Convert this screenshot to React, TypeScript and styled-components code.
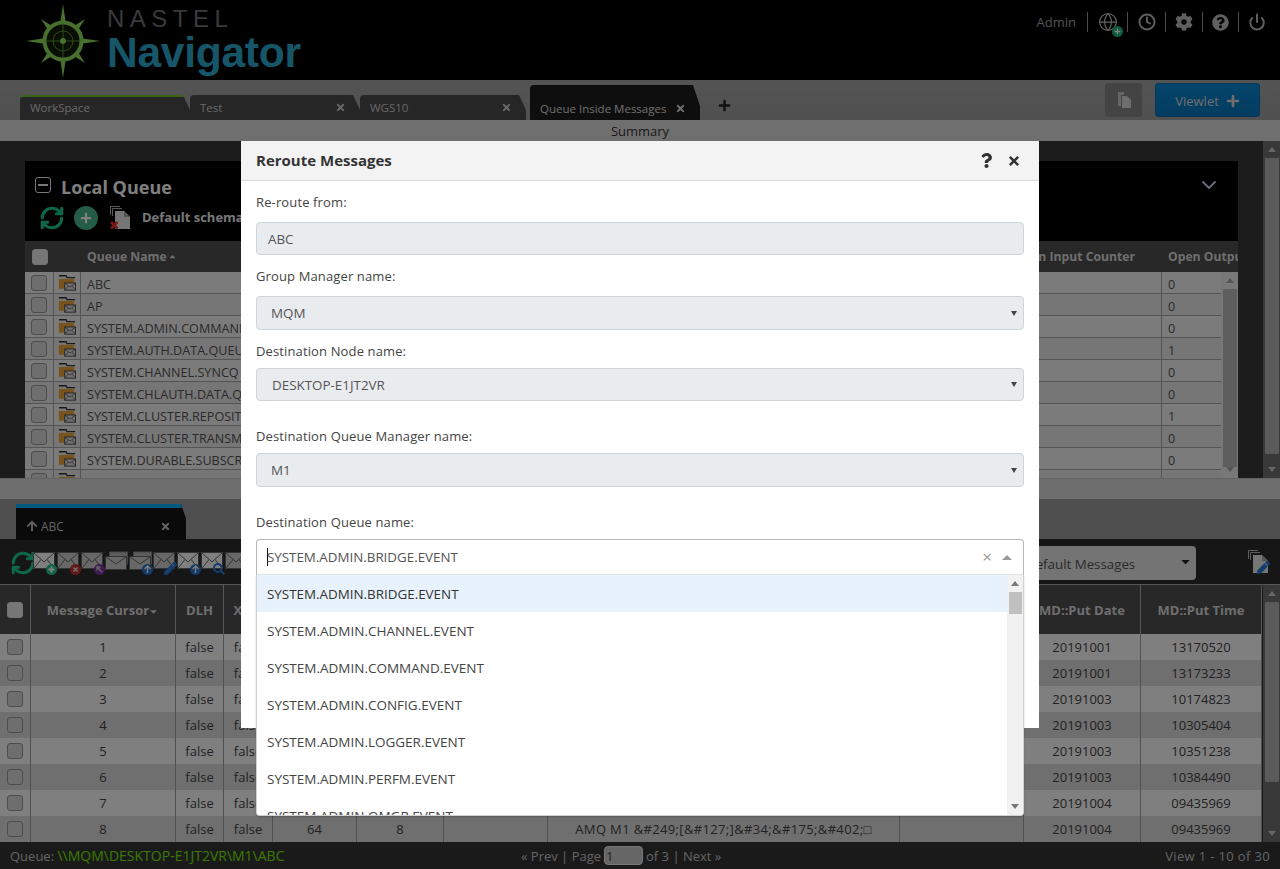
import React from "react";
import styled, { createGlobalStyle } from "styled-components";
import { FaCog, FaQuestionCircle, FaPlus, FaTimes, FaArrowUp, FaSearch, FaPen, FaQuestion, FaCaretDown, FaCaretUp } from "react-icons/fa";
import { Globe, Clock, Power, ChevronDown, RefreshCw } from "lucide-react";

const Global = createGlobalStyle`
  html, body { margin: 0; padding: 0; height: 100%; overflow: hidden; background: #000; }
  body { font-family: "Open Sans", "Liberation Sans", sans-serif; font-size: 13px; color: #555; }
  * { box-sizing: border-box; }
`;

const Page = styled.div`height: 869px; display: flex; flex-direction: column; overflow: hidden;`;
const Header = styled.header`height: 80px; background: #000; display: flex; justify-content: space-between; padding: 0 5px 0 26px;`;
const Logo = styled.div`display: flex; align-items: flex-start; gap: 7px; padding-top: 4px;`;
const LogoText = styled.div`display: flex; flex-direction: column; font-family: "Liberation Sans", sans-serif; padding-top: 3px;`;
const LogoTop = styled.span`font-size: 24px; line-height: 24px; letter-spacing: 5.5px; color: #747474;`;
const LogoMain = styled.span`font-size: 42.5px; line-height: 42px; font-weight: 700; letter-spacing: -0.25px; color: #36d4ff; margin-top: 1px; opacity: .82;`;
const UserBar = styled.div`display: flex; align-items: center; height: 44px; color: #a6a6a6;`;
const UserName = styled.span`font-size: 13px; margin-right: 11px;`;
const UserIcon = styled.div<{ $w: number }>`
  position: relative; width: ${p => p.$w}px; height: 20px; display: flex; align-items: center; justify-content: center; border-left: 1px solid #999; color: #c0c0c0;
`;
const GlobeBadge = styled.span`position: absolute; right: 4px; bottom: -5px; width: 11px; height: 11px; border-radius: 50%; background: #1fb67a; color: #fff; display: flex; align-items: center; justify-content: center;`;

const TabBar = styled.div`height: 40px; background: linear-gradient(#a8a8a8, #a0a0a0); display: flex; align-items: flex-end; padding: 0 20px; position: relative;`;
const Tab = styled.div<{ $w: number; $active?: boolean; $top?: string; $mr?: number }>`
  width: ${p => p.$w}px; height: ${p => (p.$active ? 35 : 25)}px; margin-right: ${p => p.$mr ?? 0}px;
  background: ${p => (p.$active ? "#1c1c1c" : "#4c4c4c")}; color: ${p => (p.$active ? "#ddd" : "#d0d0d0")};
  border-top: 2px solid ${p => p.$top ?? "transparent"}; border-top-left-radius: 4px;
  clip-path: polygon(0 0, calc(100% - 7px) 0, 100% 60%, 100% 100%, 0 100%);
  display: flex; align-items: center; justify-content: space-between; padding: ${p => (p.$active ? "9px" : "0")} 14px ${p => (p.$active ? "0" : "2px")} 10px; font-size: 11.5px; white-space: nowrap;
`;
const AddTab = styled.span`margin: 0 0 8px 18px; color: #222; display: flex;`;
const TabActions = styled.div`margin-left: auto; align-self: flex-start; padding-top: 3px; display: flex; gap: 13px;`;
const CopyButton = styled.button`width: 37px; height: 34px; border: none; border-radius: 3px; background: #888; display: flex; align-items: center; justify-content: center; padding: 0;`;
const ViewletButton = styled.button`width: 105px; height: 34px; border: 1px solid #0a6fb8; border-radius: 3px; background: linear-gradient(#0a8ad8, #0878c0); color: #ddd; font: 13px "Open Sans", sans-serif; display: flex; align-items: center; justify-content: center; gap: 7px; padding: 1px 0 0;`;
const SummaryBar = styled.div`height: 21px; background: #dedede; color: #333; text-align: center; font-size: 13px; line-height: 22px;`;

const UpperArea = styled.section`height: 337px; background: #383838; display: flex; overflow: hidden;`;
const PanelWrap = styled.div`flex: 1; padding: 20px 25px 0 25px; min-width: 0;`;
const Panel = styled.div`height: 317px; display: flex; flex-direction: column; overflow: hidden;`;
const PanelHead = styled.div`height: 80px; background: #000; padding: 14px 10px 0 10px; display: flex; flex-direction: column; position: relative;`;
const TitleRow = styled.div`display: flex; align-items: center; gap: 10px;`;
const TitleText = styled.h2`margin: 0; color: #fff; font-size: 18px; line-height: 24px; font-weight: 700;`;
const MinusBox = styled.span`width: 16px; height: 16px; border: 1.5px solid #eee; border-radius: 3px; position: relative; margin-top: -4px;
  &::after { content: ""; position: absolute; left: 2px; right: 2px; top: 5.5px; height: 2px; background: #eee; }`;
const ToolRow = styled.div`display: flex; align-items: center; margin-top: 6px; margin-left: 4px;`;
const PlusDisc = styled.span`width: 24px; height: 24px; border-radius: 50%; background: #49b98f; color: #fff; display: flex; align-items: center; justify-content: center; margin: 0 12px 0 9px;`;
const SchemaLabel = styled.span`color: #eee; font-weight: 700; font-size: 13px; margin-left: 10px; padding-bottom: 3px; white-space: nowrap;`;
const Collapse = styled.span`position: absolute; right: 17px; top: 12px; color: #cfe0f0; display: flex;`;

const UpperHead = styled.div`height: 31px; flex: none; background: #505050; display: grid; grid-template-columns: 29px 27px 1fr 190px 76px; align-items: center; color: #ddd; font-weight: 700; font-size: 12.2px; white-space: nowrap; overflow: hidden;`;
const HeadCell = styled.div<{ $right?: boolean; $pad?: number }>`padding: 0 ${p => p.$pad ?? 6}px; text-align: ${p => (p.$right ? "right" : "left")}; overflow: hidden;`;
const CheckCell = styled.div`display: flex; justify-content: center; align-items: center; height: 100%;`;
const Check = styled.span<{ $filled?: boolean }>`width: 16px; height: 16px; border-radius: 3px; border: 1px solid ${p => (p.$filled ? "#e4e4e4" : "#9a9a9a")}; background: ${p => (p.$filled ? "#eee" : "#dcdcdc")}; display: block;`;
const UpperBody = styled.div`display: flex; flex: 1; min-height: 0; overflow: hidden;`;
const UpperRows = styled.div`flex: 1; min-width: 0;`;
const UpperRow = styled.div<{ $alt?: boolean }>`height: 22px; display: grid; grid-template-columns: 29px 27px 1fr 59px; background: ${p => (p.$alt ? "#ececec" : "#f6f6f6")}; border-bottom: 1px solid #a8a8a8; color: #555; font-size: 12.6px;`;
const UpperCell = styled.div`border-right: 1px solid #a8a8a8; padding: 3px 6px 0; white-space: nowrap; overflow: hidden; display: flex; align-items: center;
  &:last-child { border-right: none; }`;
const UpperCheck = styled(UpperCell)`padding: 0; justify-content: center;`;
const IconCell = styled(UpperCell)`padding: 0; justify-content: center;`;

const Track = styled.div<{ $bg: string; $w: number }>`width: ${p => p.$w}px; flex: none; background: ${p => p.$bg}; display: flex; flex-direction: column; align-items: center;`;
const Thumb = styled.div<{ $h: number; $c: string; $top: number }>`width: calc(100% - 3px); height: ${p => p.$h}px; background: ${p => p.$c}; margin-top: ${p => p.$top}px;`;
const Arrow = styled.span<{ $down?: boolean; $c: string }>`width: 0; height: 0; margin: 6px 0; border-left: 4.5px solid transparent; border-right: 4.5px solid transparent;
  ${p => (p.$down ? `border-top: 5px solid ${p.$c}; margin-top: auto;` : `border-bottom: 5px solid ${p.$c};`)}`;

const Scroll: React.FC<{ bg: string; arrow: string; thumb: string; w?: number; h: number; top?: number }> = ({ bg, arrow, thumb, w = 16, h, top = 0 }) => (
  <Track $bg={bg} $w={w}>
    <Arrow $c={arrow} />
    <Thumb $c={thumb} $h={h} $top={top} />
    <Arrow $c={arrow} $down />
  </Track>
);

const Divider = styled.div`height: 21px; background: #dcdcdc; border-top: 1px solid #c8c8c8;`;
const LowerTabs = styled.div`height: 40px; background: #9e9e9e; padding: 5px 0 0 16px; display: flex;`;
const MsgTab = styled.div`width: 170px; height: 36px; background: #141414; border-top: 4px solid #08b4f8; clip-path: polygon(0 0, calc(100% - 5px) 0, 100% 40%, 100% 100%, 0 100%); color: #c8c8c8; display: flex; align-items: center; padding: 4px 15px 0 10px; gap: 3px; font-size: 12px;`;
const MsgTabClose = styled.span`margin-left: auto; display: flex;`;
const Toolbar = styled.div`height: 46px; background: #2c2c2c; display: flex; align-items: center; padding: 3px 10px 0; border-bottom: 1px solid #b0b0b0;`;
const EnvelopeGroup = styled.div`display: flex; align-items: center; margin-left: -3px;`;
const MsgSelect = styled.div`margin-left: auto; width: 196px; height: 34px; border-radius: 4px; background: #e9e9e9; color: #555; padding: 2px 3px 0 26px; display: flex; align-items: center; justify-content: space-between; font-size: 13.3px;`;
const SelectArrow = styled.span`display: flex; margin: -6px 1px 0 0;`;
const DocEdit = styled.span`margin: 0 0 3px 52px; display: flex;`;

const LowerTable = styled.div`flex: 1; display: flex; flex-direction: column; min-height: 0; overflow: hidden;`;
const LowerInner = styled.div`display: flex; flex: 1; min-height: 0; overflow: hidden;`;
const LowerCols = styled.div`width: 1263px; flex: none; border-right: 1px solid #333;`;
const cols = "31px 145px 48px 49px 84px 87px 104px 352px 124px 117px 121px";
const LowerHead = styled.div`height: 49px; background: #505050; display: grid; grid-template-columns: ${cols}; color: #ddd; font-weight: 700; font-size: 13px;`;
const LowerHeadCell = styled.div`border-right: 1px solid #b0b0b0; display: flex; align-items: center; justify-content: center; white-space: nowrap; overflow: hidden;`;
const LowerRow = styled.div<{ $alt?: boolean }>`height: 26px; display: grid; grid-template-columns: ${cols}; background: ${p => (p.$alt ? "#dedede" : "#fff")}; color: #444; font-size: 13px;`;
const LowerCell = styled.div`border-right: 1px solid #a0a0a0; display: flex; align-items: center; justify-content: center; white-space: nowrap; overflow: hidden;`;
const Payload = styled.span`letter-spacing: .35px;`;
const SortMark = styled.span`display: inline-flex; margin-left: -1px; margin-top: 3px;`;

const Footer = styled.footer`height: 27px; flex: none; background: #343434; color: #c8c8c8; display: grid; grid-template-columns: 511px auto 1fr; align-items: center; padding: 0 10px; font-size: 13px;`;
const PathText = styled.span`color: #78f000; font-size: 14px;`;
const Pager = styled.div`display: flex; align-items: center; gap: 3px;`;
const PageInput = styled.span`width: 39px; height: 19px; border-radius: 4px; background: #ccc; border: 1px solid #eee; color: #444; padding-left: 1px; line-height: 18px; font-size: 13px;`;
const ViewCount = styled.div`text-align: right; letter-spacing: .35px;`;

const Backdrop = styled.div`position: fixed; inset: 0; background: rgba(0,0,0,.5);`;
const Modal = styled.div`position: fixed; left: 241px; top: 141px; width: 798px; height: 587px; background: #fff; color: #444; display: flex; flex-direction: column;`;
const ModalHead = styled.div`height: 40px; flex: none; background: #f3f3f3; border-bottom: 1px solid #dcdcdc; display: flex; align-items: center; padding: 0 18px 0 15px; color: #333;`;
const ModalTitle = styled.h3`margin: 0 0 2px; font-size: 15px; font-weight: 700; flex: 1;`;
const ModalIcons = styled.div`display: flex; align-items: center; gap: 13px; color: #333;`;
const ModalBody = styled.div`padding: 0 15px;`;
const Field = styled.div<{ $top: number; $gap: number }>`margin-top: ${p => p.$top}px; display: flex; flex-direction: column; gap: ${p => p.$gap}px; position: relative;`;
const Label = styled.label`font-size: 13px; line-height: 20px; color: #444; letter-spacing: .13px;`;
const ReadBox = styled.div<{ $h: number; $pad?: number }>`height: ${p => p.$h}px; background: #e9ecef; border: 1px solid #ced4da; border-radius: 4px; display: flex; align-items: center; justify-content: space-between; padding: 0 6px 0 ${p => p.$pad ?? 15}px; font-size: 13.4px; color: #555;`;
const SelectCaret = styled.span`width: 0; height: 0; border-left: 3.5px solid transparent; border-right: 3.5px solid transparent; border-top: 5px solid #444;`;
const Combo = styled.div`position: relative;`;
const ComboInput = styled.div`height: 36px; border: 1px solid #b8b8b8; border-bottom-color: #e4e4e4; border-radius: 4px 4px 0 0; display: flex; align-items: center; padding: 0 11px 0 10px; color: #555; font-size: 13.35px;`;
const Caret = styled.span`width: 1px; height: 18px; background: #111; margin-right: -1px;`;
const ComboText = styled.span`flex: 1;`;
const ClearX = styled.span`color: #999; font-size: 17px; line-height: 16px; margin-right: 10px;`;
const UpCaret = styled.span`width: 0; height: 0; border-left: 5px solid transparent; border-right: 5px solid transparent; border-bottom: 5px solid #999;`;
const DropList = styled.div`position: absolute; left: 0; right: 0; top: 100%; height: 241px; background: #fff; border: 1px solid #d0d0d0; border-top: none; border-radius: 0 0 4px 4px; display: flex; overflow: hidden; z-index: 2; box-shadow: 0 1px 2px rgba(0,0,0,.2);`;
const Items = styled.div`flex: 1; min-width: 0; overflow: hidden;`;
const Item = styled.div<{ $active?: boolean }>`height: 37px; line-height: 39px; padding-left: 10px; font-size: ${p => (p.$active ? "13.4px" : "13.5px")}; color: ${p => (p.$active ? "#333" : "#444")}; background: ${p => (p.$active ? "#e8f2fc" : "#fff")}; font-weight: ${p => (p.$active ? 500 : 400)}; white-space: nowrap;`;

const Compass = () => (
  <svg width="74" height="74" viewBox="0 0 74 74">
    <g fill="#8ee05c">
      <polygon points="37,0 41,27 33,27" /><polygon points="37,74 41,47 33,47" />
      <polygon points="0,37 27,33 27,41" /><polygon points="74,37 47,33 47,41" />
      <polygon points="15,15 26,22 22,26" /><polygon points="59,15 52,26 48,22" />
      <polygon points="15,59 22,48 26,52" /><polygon points="59,59 48,52 52,48" />
    </g>
    <circle cx="37" cy="37" r="18.5" fill="#101c08" stroke="#8ee05c" strokeWidth="4" />
    <circle cx="37" cy="37" r="10" fill="none" stroke="#6cb044" strokeWidth=".8" />
    <path d="M37 19V55M19 37H55" stroke="#6cb044" strokeWidth=".8" />
    <circle cx="37" cy="37" r="3" fill="#8ee05c" />
  </svg>
);

const Refresh: React.FC = () => <RefreshCw size={26} color="#1fcf96" strokeWidth={2.8} />;

const StackDoc: React.FC<{ children?: React.ReactNode }> = ({ children }) => (
  <svg width="22" height="24" viewBox="0 0 22 24">
    <path d="M.5 9V.5H10M2.500 10V2.500H12" stroke="#ccc" strokeWidth=".9" fill="none" />
    <path d="M5 5H14L20 11V23H5Z" fill="#ececec" />
    <path d="M14 5V11H20Z" fill="#aaa" />
    {children}
  </svg>
);

const Envelope: React.FC<{ light?: boolean; double?: boolean; badge?: string; glyph?: React.ReactNode }> = ({ light, double, badge, glyph }) => {
  const fill = light ? "#fff" : "#d0d0d0";
  return (
    <svg width="24" height="24" viewBox="0 0 24 24">
      {double && <rect x="4.5" y="1" width="18" height="12" fill="#bbb" stroke="#888" />}
      <rect x="0.5" y={double ? 5.5 : 1.5} width="21" height={double ? 13 : 16} fill={fill} stroke="#666" />
      <path d={double ? "M1 6L11 13L21 6" : "M1 2L11 11L21 2M1 17L8 8.5M21 17L14 8.5"} fill="none" stroke="#666" strokeWidth="1" />
      {badge && <circle cx="18.5" cy="18.5" r="5.5" fill={badge} />}
      {glyph}
    </svg>
  );
};
const plusG = <path d="M18.500 15.500v6M15.500 18.500h6" stroke="#fff" strokeWidth="2" />;
const xG = <path d="M16.500 16.500l4 4m0-4l-4 4" stroke="#ddd" strokeWidth="1.600" />;
const nwG = <path d="M21 21l-5-5m0 3.500v-3.500h3.500" stroke="#ccc" strokeWidth="1.400" fill="none" />;
const upG = <path d="M18.500 22v-7m-3 3l3-3l3 3" stroke="#fff" strokeWidth="1.400" fill="none" />;

const FolderMail = () => (
  <svg width="18" height="17" viewBox="0 0 20 18">
    <path d="M1 1.500H9L10 3.500H19" fill="none" stroke="#333" strokeWidth="1.400" />
    <path d="M1 5H18V16H1Z" fill="#f0a838" />
    <rect x="7.500" y="9.500" width="12" height="8" fill="#e4e4e4" stroke="#444" />
    <path d="M8 10L13.500 14L19 10M8 17L11.500 13M19 17L15.500 13" stroke="#444" strokeWidth=".8" fill="none" />
  </svg>
);

const upperNames = ["ABC", "AP", "SYSTEM.ADMIN.COMMAND.QUEUE", "SYSTEM.AUTH.DATA.QUEUE", "SYSTEM.CHANNEL.SYNCQ", "SYSTEM.CHLAUTH.DATA.QUEUE", "SYSTEM.CLUSTER.REPOSITORY.QUEUE", "SYSTEM.CLUSTER.TRANSMIT.QUEUE", "SYSTEM.DURABLE.SUBSCRIBER.QUEUE", ""];
const upperOut = ["0", "0", "0", "1", "0", "0", "1", "0", "0", ""];
const lowerRows = [
  ["1", "20191001", "13170520"], ["2", "20191001", "13173233"], ["3", "20191003", "10174823"], ["4", "20191003", "10305404"],
  ["5", "20191003", "10351238"], ["6", "20191003", "10384490"], ["7", "20191004", "09435969"], ["8", "20191004", "09435969"],
];
const payload = "AMQ M1 \u0026#249;[\u0026#127;]\u0026#34;\u0026#175;\u0026#402;\u25A1";
const options = ["BRIDGE", "CHANNEL", "COMMAND", "CONFIG", "LOGGER", "PERFM", "QMGR"].map(s => `SYSTEM.ADMIN.${s}.EVENT`);

export default function App() {
  return (
    <>
      <Global />
      <Page>
        <Header>
          <Logo>
            <Compass />
            <LogoText>
              <LogoTop>NASTEL</LogoTop>
              <LogoMain>Navigator</LogoMain>
            </LogoText>
          </Logo>
          <UserBar>
            <UserName>Admin</UserName>
            <UserIcon $w={40}><Globe size={20} strokeWidth={1.5} /><GlobeBadge><FaPlus size={7} /></GlobeBadge></UserIcon>
            <UserIcon $w={38}><Clock size={18} strokeWidth={2.6} /></UserIcon>
            <UserIcon $w={37}><FaCog size={18} /></UserIcon>
            <UserIcon $w={36}><FaQuestionCircle size={17} /></UserIcon>
            <UserIcon $w={37}><Power size={18} strokeWidth={2.6} /></UserIcon>
          </UserBar>
        </Header>
        <TabBar>
          <Tab $w={170} $top="#6ecc2c">WorkSpace</Tab>
          <Tab $w={170}>Test<FaTimes size={11} /></Tab>
          <Tab $w={166} $mr={4}>WGS10<FaTimes size={11} /></Tab>
          <Tab $w={170} $active>Queue Inside Messages<FaTimes size={11} /></Tab>
          <AddTab><FaPlus size={13} /></AddTab>
          <TabActions>
            <CopyButton>
              <svg width="16" height="18" viewBox="0 0 16 18"><path d="M2 1H8V4H5V15H2Z" fill="#ccc" /><path d="M6 5H11L15 9V17H6Z" fill="#ddd" /></svg>
            </CopyButton>
            <ViewletButton>Viewlet <FaPlus size={14} /></ViewletButton>
          </TabActions>
        </TabBar>
        <SummaryBar>Summary</SummaryBar>
        <UpperArea>
          <PanelWrap>
            <Panel>
              <PanelHead>
                <TitleRow><MinusBox /><TitleText>Local Queue</TitleText></TitleRow>
                <ToolRow>
                  <Refresh />
                  <PlusDisc><FaPlus size={12} /></PlusDisc>
                  <StackDoc><path d="M1 16l6.500 6.500m0-6.500l-6.500 6.500" stroke="#f03030" strokeWidth="2.600" /></StackDoc>
                  <SchemaLabel>Default schema</SchemaLabel>
                </ToolRow>
                <Collapse><ChevronDown size={24} strokeWidth={1.8} /></Collapse>
              </PanelHead>
              <UpperHead>
                <CheckCell><Check $filled /></CheckCell>
                <div />
                <HeadCell>Queue Name <FaCaretUp size={9} style={{ marginLeft: -2 }} /></HeadCell>
                <HeadCell $right $pad={27}>Open Input Counter</HeadCell>
                <HeadCell>Open Output Counter</HeadCell>
              </UpperHead>
              <UpperBody>
                <UpperRows>
                  {upperNames.map((n, i) => (
                    <UpperRow key={i} $alt={i % 2 === 1}>
                      <UpperCheck><Check /></UpperCheck>
                      <IconCell><FolderMail /></IconCell>
                      <UpperCell>{n}</UpperCell>
                      <UpperCell>{upperOut[i]}</UpperCell>
                    </UpperRow>
                  ))}
                </UpperRows>
                <Scroll bg="#f0f0f0" arrow="#aaa" thumb="#bcbcbc" w={17} h={200} />
              </UpperBody>
            </Panel>
          </PanelWrap>
          <Scroll bg="#707070" arrow="#ccc" thumb="#b4b4b4" w={17} h={296} />
        </UpperArea>
        <Divider />
        <LowerTabs>
          <MsgTab>
            <FaArrowUp size={12} /> ABC
            <MsgTabClose><FaTimes size={11} /></MsgTabClose>
          </MsgTab>
        </LowerTabs>
        <Toolbar>
          <Refresh />
          <EnvelopeGroup>
            <Envelope light badge="#22c88c" glyph={plusG} />
            <Envelope badge="#c83030" glyph={xG} />
            <Envelope badge="#8030a8" glyph={nwG} />
            <Envelope double />
            <Envelope double badge="#2474c8" glyph={upG} />
            <Envelope glyph={<FaPen x={11} y={11} size={13} color="#2878d8" />} />
            <Envelope light glyph={upG} badge="#2474c8" />
            <Envelope light glyph={<FaSearch x={12} y={12} size={12} color="#2a7fe0" />} />
            <Envelope />
          </EnvelopeGroup>
          <MsgSelect>Default Messages<SelectArrow><FaCaretDown size={13} color="#222" /></SelectArrow></MsgSelect>
          <DocEdit>
            <StackDoc><FaPen x={9} y={11} size={13} color="#2878d8" /></StackDoc>
          </DocEdit>
        </Toolbar>
        <LowerTable>
          <LowerInner>
            <LowerCols>
              <LowerHead>
                <LowerHeadCell><Check $filled /></LowerHeadCell>
                <LowerHeadCell>Message Cursor<SortMark><FaCaretDown size={11} /></SortMark></LowerHeadCell>
                <LowerHeadCell>DLH</LowerHeadCell>
                <LowerHeadCell>XQH</LowerHeadCell>
                <LowerHeadCell />
                <LowerHeadCell />
                <LowerHeadCell />
                <LowerHeadCell />
                <LowerHeadCell />
                <LowerHeadCell>MD::Put Date</LowerHeadCell>
                <LowerHeadCell>MD::Put Time</LowerHeadCell>
              </LowerHead>
              {lowerRows.map((r, i) => (
                <LowerRow key={r[0]} $alt={i % 2 === 1}>
                  <LowerCell><Check /></LowerCell>
                  <LowerCell>{r[0]}</LowerCell>
                  <LowerCell>false</LowerCell>
                  <LowerCell>false</LowerCell>
                  <LowerCell>{i === 7 ? "64" : ""}</LowerCell>
                  <LowerCell>{i === 7 ? "8" : ""}</LowerCell>
                  <LowerCell />
                  <LowerCell>{i === 7 ? <Payload>{payload}</Payload> : ""}</LowerCell>
                  <LowerCell />
                  <LowerCell>{r[1]}</LowerCell>
                  <LowerCell>{r[2]}</LowerCell>
                </LowerRow>
              ))}
            </LowerCols>
            <Scroll bg="#707070" arrow="#ccc" thumb="#b4b4b4" w={17} h={180} />
          </LowerInner>
        </LowerTable>
        <Footer>
          <span>Queue: <PathText>\\MQM\DESKTOP-E1JT2VR\M1\ABC</PathText></span>
          <Pager>« Prev | Page <PageInput>1</PageInput> of 3 | Next »</Pager>
          <ViewCount>View 1 - 10 of 30</ViewCount>
        </Footer>
      </Page>
      <Backdrop />
      <Modal>
        <ModalHead>
          <ModalTitle>Reroute Messages</ModalTitle>
          <ModalIcons><FaQuestion size={15} /><FaTimes size={14} /></ModalIcons>
        </ModalHead>
        <ModalBody>
          <Field $top={11} $gap={10}>
            <Label>Re-route from:</Label>
            <ReadBox $h={33} $pad={11}>ABC</ReadBox>
          </Field>
          <Field $top={11} $gap={10}>
            <Label>Group Manager name:</Label>
            <ReadBox $h={34} $pad={14}>MQM<SelectCaret /></ReadBox>
          </Field>
          <Field $top={11} $gap={7}>
            <Label>Destination Node name:</Label>
            <ReadBox $h={33}>DESKTOP-E1JT2VR<SelectCaret /></ReadBox>
          </Field>
          <Field $top={25} $gap={7}>
            <Label>Destination Queue Manager name:</Label>
            <ReadBox $h={34} $pad={14}>M1<SelectCaret /></ReadBox>
          </Field>
          <Field $top={25} $gap={7}>
            <Label>Destination Queue name:</Label>
            <Combo>
              <ComboInput>
                <Caret />
                <ComboText>SYSTEM.ADMIN.BRIDGE.EVENT</ComboText>
                <ClearX>×</ClearX>
                <UpCaret />
              </ComboInput>
              <DropList>
                <Items>
                  {options.map((o, i) => <Item key={o} $active={i === 0}>{o}</Item>)}
                </Items>
                <Scroll bg="#f1f1f1" arrow="#777" thumb="#c0c0c0" h={22} top={0} />
              </DropList>
            </Combo>
          </Field>
        </ModalBody>
      </Modal>
    </>
  );
}
